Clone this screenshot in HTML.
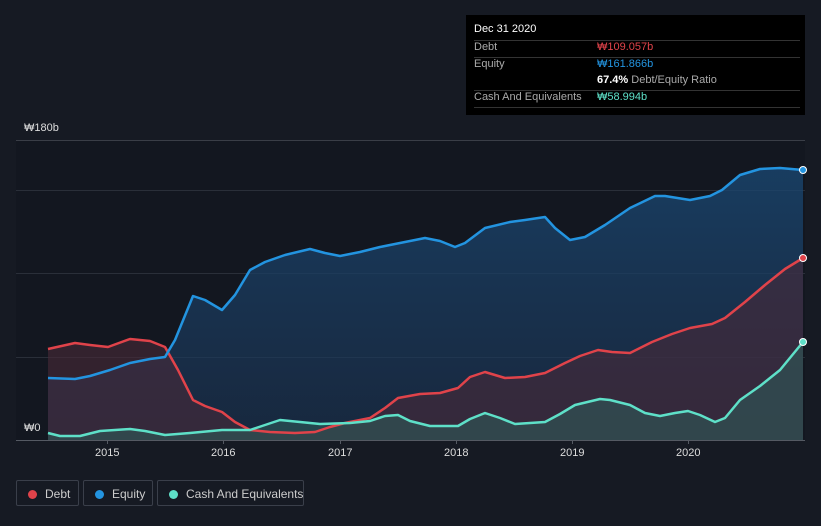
<!DOCTYPE html><html><head><style>
body{margin:0;width:821px;height:526px;background:#161a23;font-family:"Liberation Sans",sans-serif;overflow:hidden;position:relative}
.t{position:absolute;font-size:11px;color:#ddd}
.tip{position:absolute;left:466px;top:15px;width:339px;height:100px;background:#000;font-size:11px;color:#aaa}
.tip div{position:absolute;left:8px;right:5px;height:16px;border-bottom:1px solid #333;white-space:nowrap}
.tip span{position:absolute;left:123px}
.lg{position:absolute;top:480px;height:26px;border:1px solid #3a3f4a;border-radius:2px;color:#ccc;font-size:12px;line-height:26px;box-sizing:border-box;white-space:nowrap}
.lg i{position:absolute;left:11px;top:9px;width:9px;height:9px;border-radius:50%}
.lg span{position:absolute;left:28px;white-space:nowrap}
</style></head><body>
<svg width="821" height="526" style="position:absolute;left:0;top:0">
<rect x="16" y="141" width="789" height="299" fill="#131720"/>
<line x1="16" y1="140.5" x2="805" y2="140.5" stroke="#3a3e47"/>
<g stroke-width="1"><line x1="16" y1="190.5" x2="805" y2="190.5" stroke="#2a2f39"/><line x1="16" y1="273.5" x2="805" y2="273.5" stroke="#2a2f39"/><line x1="16" y1="357.5" x2="805" y2="357.5" stroke="#2a2f39"/></g>
<defs><linearGradient id="ge" x1="0" y1="0" x2="0" y2="1"><stop offset="0" stop-color="#1a4670" stop-opacity=".8"/><stop offset="1" stop-color="#1a3352" stop-opacity=".6"/></linearGradient></defs>
<polygon fill="url(#ge)" points="48,378 75,379 90,376 110,370 130,363 150,359 165,357 175,340 193,296 205,300 222,310 235,295 250,270 265,262 285,255 310,249 325,253 340,256 360,252 380,247 400,243 425,238 440,241 455,247 465,243 485,228 510,222 525,220 545,217 555,228 570,240 585,237 605,225 630,208 655,196 665,196 690,200 710,196 722,190 740,175 760,169 780,168 803,170 803,440 48,440"/>
<polygon fill="#4a2a38" fill-opacity=".6" points="48,349 75,343 90,345 108,347 130,339 150,341 165,347 178,370 193,400 205,406 222,412 235,422 250,430 270,432 295,433 315,432 330,427 345,423 370,418 385,408 398,398 420,394 440,393 458,388 470,377 485,372 505,378 525,377 545,373 565,363 580,356 598,350 612,352 630,353 652,342 672,334 690,328 712,324 725,318 745,302 765,285 785,269 803,258 803,440 48,440"/>
<polygon fill="#2f5a58" fill-opacity=".6" points="48,433 60,436 80,436 100,431 130,429 145,431 165,435 190,433 222,430 250,430 262,426 280,420 300,422 320,424 350,423 370,421 385,416 398,415 410,421 430,426 458,426 470,419 485,413 500,418 515,424 545,422 560,414 575,405 600,399 610,400 630,405 645,413 660,416 675,413 688,411 700,415 715,422 725,418 740,400 760,386 780,370 803,342 803,440 48,440"/>
<g fill="none" stroke-width="2.5" stroke-linejoin="round">
<polyline stroke="#e0434a" points="48,349 75,343 90,345 108,347 130,339 150,341 165,347 178,370 193,400 205,406 222,412 235,422 250,430 270,432 295,433 315,432 330,427 345,423 370,418 385,408 398,398 420,394 440,393 458,388 470,377 485,372 505,378 525,377 545,373 565,363 580,356 598,350 612,352 630,353 652,342 672,334 690,328 712,324 725,318 745,302 765,285 785,269 803,258"/>
<polyline stroke="#2394e0" points="48,378 75,379 90,376 110,370 130,363 150,359 165,357 175,340 193,296 205,300 222,310 235,295 250,270 265,262 285,255 310,249 325,253 340,256 360,252 380,247 400,243 425,238 440,241 455,247 465,243 485,228 510,222 525,220 545,217 555,228 570,240 585,237 605,225 630,208 655,196 665,196 690,200 710,196 722,190 740,175 760,169 780,168 803,170"/>
<polyline stroke="#5ee0c8" points="48,433 60,436 80,436 100,431 130,429 145,431 165,435 190,433 222,430 250,430 262,426 280,420 300,422 320,424 350,423 370,421 385,416 398,415 410,421 430,426 458,426 470,419 485,413 500,418 515,424 545,422 560,414 575,405 600,399 610,400 630,405 645,413 660,416 675,413 688,411 700,415 715,422 725,418 740,400 760,386 780,370 803,342"/>
</g>
<circle cx="803" cy="170" r="3.5" fill="#2394e0" stroke="#fff" stroke-width="1"/>
<circle cx="803" cy="258" r="3.5" fill="#e0434a" stroke="#fff" stroke-width="1"/>
<circle cx="803" cy="342" r="3.5" fill="#5ee0c8" stroke="#fff" stroke-width="1"/>
<line x1="16" y1="440.5" x2="805" y2="440.5" stroke="#555a63"/>
<g stroke="#555a63"><line x1="107.5" y1="440" x2="107.5" y2="444"/><line x1="223.5" y1="440" x2="223.5" y2="444"/><line x1="340.5" y1="440" x2="340.5" y2="444"/><line x1="456.5" y1="440" x2="456.5" y2="444"/><line x1="572.5" y1="440" x2="572.5" y2="444"/><line x1="688.5" y1="440" x2="688.5" y2="444"/></g>
</svg>
<div class="t" style="left:24px;top:122px">₩180b</div>
<div class="t" style="left:24px;top:422px">₩0</div>
<div class="t" style="left:95px;top:447px">2015</div><div class="t" style="left:211px;top:447px">2016</div><div class="t" style="left:328px;top:447px">2017</div><div class="t" style="left:444px;top:447px">2018</div><div class="t" style="left:560px;top:447px">2019</div><div class="t" style="left:676px;top:447px">2020</div>
<div class="tip">
<div style="top:8px;color:#fff;border:none">Dec 31 2020</div>
<div style="top:10px;height:15px;border-bottom:1px solid #333"></div>
<div style="top:26px">Debt<span style="color:#e0434a">₩109.057b</span></div>
<div style="top:43px;border:none">Equity<span style="color:#2394e0">₩161.866b</span></div>
<div style="top:59px"><span><b style="color:#fff">67.4%</b> Debt/Equity Ratio</span></div>
<div style="top:76px">Cash And Equivalents<span style="color:#5ee0c8">₩58.994b</span></div>
</div>
<div class="lg" style="left:16px;width:63px"><i style="background:#e0434a"></i><span>Debt</span></div>
<div class="lg" style="left:83px;width:70px"><i style="background:#2394e0"></i><span>Equity</span></div>
<div class="lg" style="left:157px;width:147px"><i style="background:#5ee0c8"></i><span>Cash And Equivalents</span></div>
</body></html>
